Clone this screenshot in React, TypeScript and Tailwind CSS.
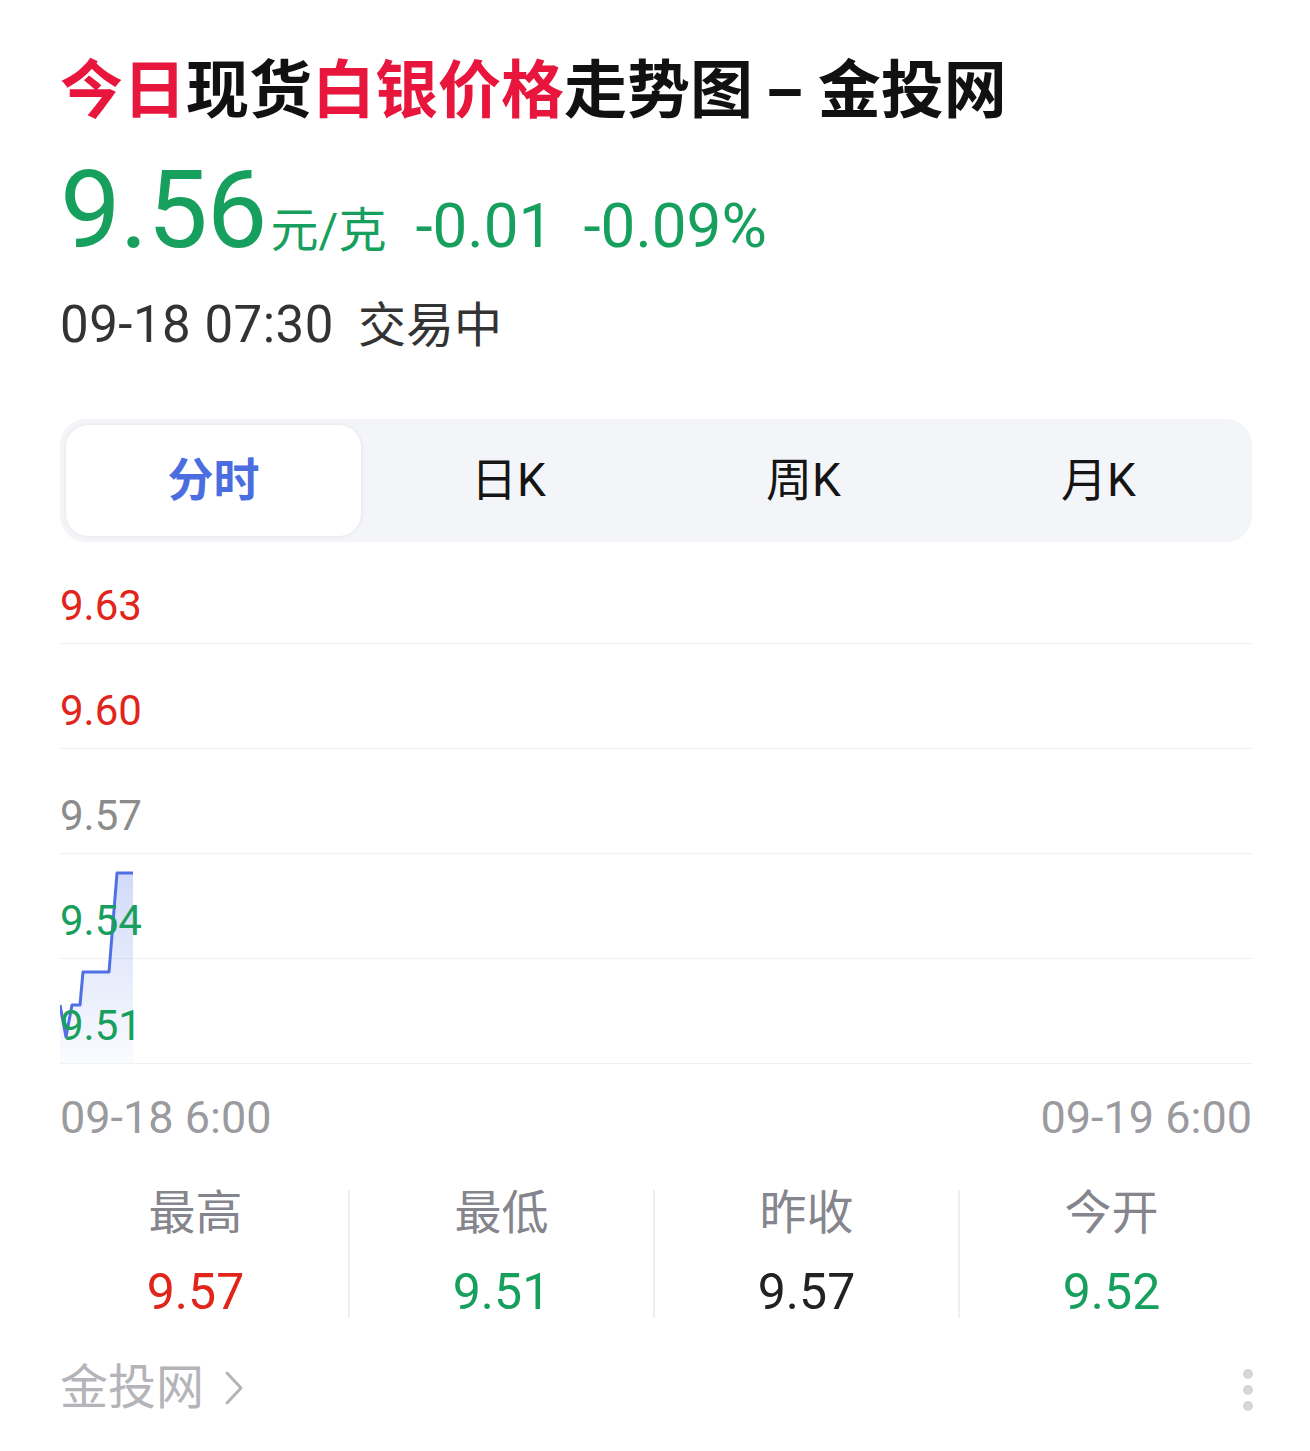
const font = { fontFamily: 'Roboto, "Noto Sans CJK SC", sans-serif' };

const tabs = ["分时", "日K", "周K", "月K"];

const yLabels = [
  { v: "9.63", c: "text-[#e1251b]", h: "h-[102px]" },
  { v: "9.60", c: "text-[#e1251b]", h: "h-[105px]" },
  { v: "9.57", c: "text-[#8c8c8c]", h: "h-[105px]" },
  { v: "9.54", c: "text-[#17a05d]", h: "h-[105px]" },
  { v: "9.51", c: "text-[#17a05d]", h: "h-[105px]" },
];

const stats = [
  { label: "最高", value: "9.57", c: "text-[#e1251b]" },
  { label: "最低", value: "9.51", c: "text-[#17a05d]" },
  { label: "昨收", value: "9.57", c: "text-[#222222]" },
  { label: "今开", value: "9.52", c: "text-[#17a05d]" },
];

const line = "0,463 6,495 12,463 20,463 23,430 49,430 57,331 73,331";

function Chart() {
  return (
    <div className="relative">
      <svg className="absolute left-0 top-0" width="200" height="522" viewBox="0 0 200 522">
        <defs>
          <linearGradient id="fill" x1="0" y1="0" x2="0" y2="1">
            <stop offset="0%" stopColor="#5b7be6" stopOpacity="0.28" />
            <stop offset="100%" stopColor="#5b7be6" stopOpacity="0.03" />
          </linearGradient>
        </defs>
        <polygon points={`0,521 ${line} 73,521`} fill="url(#fill)" />
        <polyline points={line} fill="none" stroke="#4f6fe3" strokeWidth="3" strokeLinejoin="round" />
      </svg>
      {yLabels.map((l) => (
        <div key={l.v} className={`${l.h} border-b border-[#f1f1f3] flex items-end pb-[13px]`}>
          <span className={`relative z-10 text-[42px] leading-[48px] ${l.c}`}>{l.v}</span>
        </div>
      ))}
    </div>
  );
}

export default function App() {
  return (
    <div className="w-[1310px] min-h-[1451px] bg-white pl-[60px] pr-[58px] pt-[54px]" style={font}>
      <h1 className="text-[63px] leading-[74px] font-bold text-[#111111] whitespace-nowrap">
        <span className="text-[#e8163c]">今日</span>现货<span className="text-[#e8163c]">白银价格</span>走势图
        <span className="inline-block mx-[20px] scale-x-[1.8]">-</span>金投网
      </h1>

      <div className="mt-[28px] flex items-baseline text-[#17a05d] leading-none">
        <span className="text-[108px] tracking-[-1px]">9.56</span>
        <span className="text-[48px] ml-[4px]">元/克</span>
        <span className="text-[62px] ml-[29px]">-0.01</span>
        <span className="text-[62px] ml-[30px]">-0.09%</span>
      </div>

      <div className="mt-[31px] flex items-baseline leading-[60px] text-[#333333]">
        <span className="text-[51px] tracking-[0.5px]">09-18 07:30</span>
        <span className="text-[48px] ml-[24px]">交易中</span>
      </div>

      <div className="mt-[63px] rounded-[26px] bg-[#f4f5f9] p-[6px] grid grid-cols-4">
        {tabs.map((t, i) => (
          <div
            key={t}
            className={`h-[111px] flex items-center justify-center rounded-[22px] text-[46px] ${
              i === 0 ? "bg-white shadow-[0_0_4px_rgba(0,0,0,0.08)] text-[#4a6ee0] font-bold" : "text-[#151515]"
            }`}
          >
            {t}
          </div>
        ))}
      </div>

      <Chart />

      <div className="mt-[28px] flex justify-between text-[45px] leading-[52px] text-[#9a9a9f]">
        <span>09-18 6:00</span>
        <span>09-19 6:00</span>
      </div>

      <div className="mt-[46px] -ml-[17px] w-[1220px] grid grid-cols-4">
        {stats.map((s, i) => (
          <div key={s.label} className={`flex flex-col items-center h-[128px] ${i > 0 ? "border-l-2 border-[#efeff1]" : ""}`}>
            <span className="text-[47px] leading-[46px] text-[#85858d]">{s.label}</span>
            <span className={`mt-[28px] text-[50px] leading-[56px] ${s.c}`}>{s.value}</span>
          </div>
        ))}
      </div>

      <div className="mt-[42px] flex items-center justify-between">
        <div className="flex items-center gap-[20px] text-[48px] leading-[56px] text-[#b4b4b9]">
          <span>金投网</span>
          <svg width="20" height="36" viewBox="0 0 20 36">
            <polyline points="3,3 17,18 3,33" fill="none" stroke="#b4b4b9" strokeWidth="3" strokeLinecap="round" strokeLinejoin="round" />
          </svg>
        </div>
        <div className="flex flex-col gap-[6px] mr-[-1px] mt-[4px]">
          <span className="w-[10px] h-[10px] rounded-full bg-[#d5d5da]" />
          <span className="w-[10px] h-[10px] rounded-full bg-[#d5d5da]" />
          <span className="w-[10px] h-[10px] rounded-full bg-[#d5d5da]" />
        </div>
      </div>
    </div>
  );
}
